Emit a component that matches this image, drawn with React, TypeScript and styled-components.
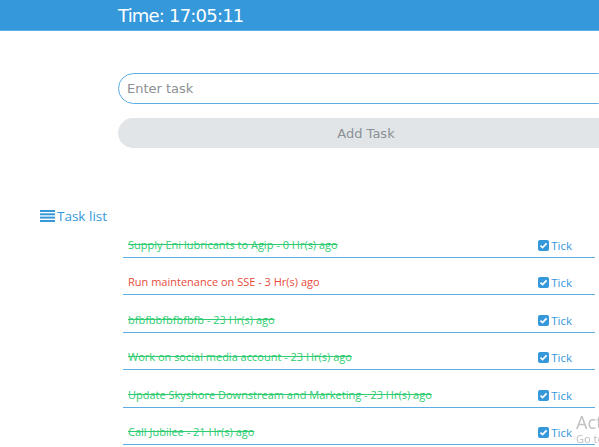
import styled, { createGlobalStyle } from 'styled-components';

const GlobalStyle = createGlobalStyle`
    html, body {
        margin: 0;
        padding: 0;
        overflow: hidden;
        background: #ffffff;
        font-family: 'Open Sans', 'Noto Sans', sans-serif;
    }
`;

const Header = styled.header`
    background: #3598db;
    border-bottom: 1px solid #5aaee6;
    height: 30px;
    padding-left: 118px;
    display: flex;
    align-items: center;
`;

const Clock = styled.h1`
    margin: 0;
    color: #ffffff;
    font-family: 'DejaVu Sans', sans-serif;
    font-weight: normal;
    font-size: 18px;
    letter-spacing: -0.8px;
`;

const Form = styled.form`
    margin: 42px 0 0 118px;
    width: 496px;
    display: flex;
    flex-direction: column;
    gap: 14px;
`;

const TaskInput = styled.input`
    height: 31px;
    box-sizing: border-box;
    border: 1px solid #5dade2;
    border-radius: 16px;
    padding: 0 8px;
    font-family: 'DejaVu Sans', sans-serif;
    font-size: 13px;
    color: #333;
    outline: none;

    &::placeholder {
        color: #8a8f94;
    }
`;

const AddButton = styled.button`
    height: 30px;
    border: 0;
    border-radius: 15px;
    background: #e1e5e8;
    color: #8b9196;
    font-family: 'DejaVu Sans', sans-serif;
    font-size: 13px;
`;

const Section = styled.section`
    margin-top: 61px;
`;

const Heading = styled.h2`
    margin: 0 0 0 40px;
    display: flex;
    align-items: center;
    gap: 2px;
    height: 14px;
    line-height: 14px;
    color: #3598db;
    font-size: 13.5px;
    font-weight: normal;
`;

const List = styled.ul`
    list-style: none;
    margin: -3px 0 0 123px;
    padding: 0;
    width: 472px;
`;

const Row = styled.li`
    display: flex;
    align-items: center;
    justify-content: space-between;
    height: 36.5px;
    padding: 0 23px 0 5px;
    border-bottom: 1px solid #5dade2;
    box-sizing: content-box;
`;

const TaskText = styled.span<{ $done: boolean }>`
    font-size: 11px;
    padding-top: 12px;
    color: ${(p) => (p.$done ? '#2ecc71' : '#e74c3c')};
    text-decoration: ${(p) => (p.$done ? 'line-through' : 'none')};
`;

const Tick = styled.span`
    display: flex;
    align-items: center;
    gap: 2px;
    padding-top: 14px;
    color: #3598db;
    font-size: 11.5px;
`;

const Watermark = styled.div`
    position: fixed;
    left: 576px;
    top: 413px;
    color: #c2c2c2;
    font-family: 'Noto Sans', sans-serif;
    white-space: nowrap;
    line-height: 1;

    div:first-child {
        font-size: 18px;
    }
    div:last-child {
        font-size: 11px;
        margin-top: 2px;
    }
`;

const ListIcon = () => (
    <svg width="15" height="12" viewBox="0 0 15 12" fill="#3598db">
        <rect x="0" y="0" width="15" height="2" />
        <rect x="0" y="3.3" width="15" height="2" />
        <rect x="0" y="6.6" width="15" height="2" />
        <rect x="0" y="10" width="15" height="2" />
    </svg>
);

const CheckIcon = () => (
    <svg width="11" height="11" viewBox="0 0 11 11">
        <rect width="11" height="11" rx="2" fill="#3598db" />
        <path d="M2.5 5.6 L4.6 7.6 L8.6 3.4" stroke="#fff" strokeWidth="1.8" fill="none" />
    </svg>
);

const tasks = [
    { text: 'Supply Eni lubricants to Agip - 0 Hr(s) ago', done: true },
    { text: 'Run maintenance on SSE - 3 Hr(s) ago', done: false },
    { text: 'bfbfbbfbfbfbfb - 23 Hr(s) ago', done: true },
    { text: 'Work on social media account - 23 Hr(s) ago', done: true },
    { text: 'Update Skyshore Downstream and Marketing - 23 Hr(s) ago', done: true },
    { text: 'Call Jubilee - 21 Hr(s) ago', done: true },
];

export default function App() {
    return (
        <>
            <GlobalStyle />
            <Header>
                <Clock>Time: 17:05:11</Clock>
            </Header>
            <Form onSubmit={(e) => e.preventDefault()}>
                <TaskInput placeholder="Enter task" />
                <AddButton type="submit">Add Task</AddButton>
            </Form>
            <Section>
                <Heading>
                    <ListIcon />
                    Task list
                </Heading>
                <List>
                    {tasks.map((t) => (
                        <Row key={t.text}>
                            <TaskText $done={t.done}>{t.text}</TaskText>
                            <Tick>
                                <CheckIcon />
                                Tick
                            </Tick>
                        </Row>
                    ))}
                </List>
            </Section>
            <Watermark>
                <div>Activate Windows</div>
                <div>Go to Settings to activate Windows.</div>
            </Watermark>
        </>
    );
}
